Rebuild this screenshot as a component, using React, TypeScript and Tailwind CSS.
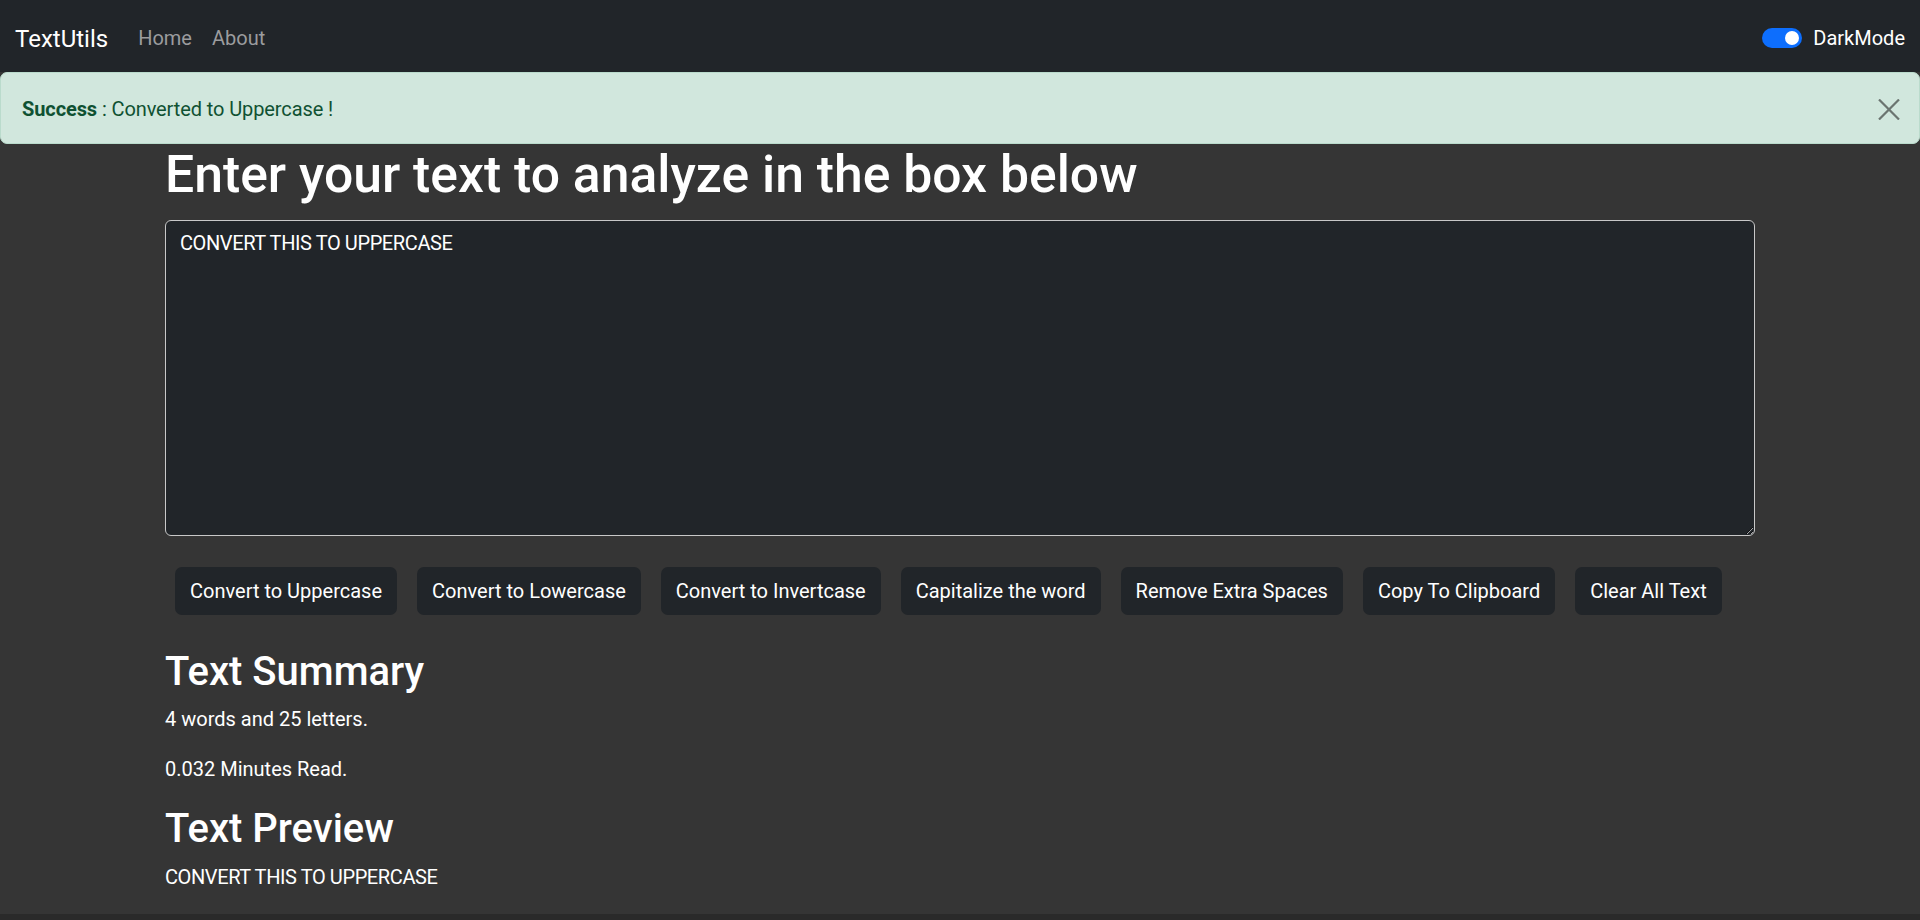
const buttons = [
  "Convert to Uppercase",
  "Convert to Lowercase",
  "Convert to Invertcase",
  "Capitalize the word",
  "Remove Extra Spaces",
  "Copy To Clipboard",
  "Clear All Text",
];

export default function App() {
  const text = "CONVERT THIS TO UPPERCASE";
  return (
    <div className="flex min-h-[920px] flex-col bg-[#353535] font-['Roboto',sans-serif] text-[20px] leading-[30px] text-white">
      <nav className="flex h-[72px] items-center bg-[#212529] px-[15px] pt-[4px]">
        <span className="mr-[20px] mt-[2px] text-[24px] leading-[32px]">TextUtils</span>
        <a className="px-[10px] text-[#9b9c9e]">Home</a>
        <a className="px-[10px] text-[#9b9c9e]">About</a>
        <div className="ml-auto flex items-center gap-[11px]">
          <span className="flex h-[20px] w-[40px] items-center justify-end rounded-full bg-[#0d6efd] px-[3px]">
            <span className="h-[14px] w-[14px] rounded-full bg-white" />
          </span>
          <span>DarkMode</span>
        </div>
      </nav>
      <div className="flex h-[72px] items-center rounded-[7px] border border-[#badbcc] bg-[#d1e7dd] pl-[21px] pr-[19px] pt-[2px] text-[#0f5132]">
        <span className="tracking-[-0.1px]">
          <strong className="font-bold">Success</strong> : Converted to Uppercase !
        </span>
        <svg className="ml-auto" width="22" height="21" viewBox="0 0 22 21">
          <path d="M1 0.5 L21 20.5 M21 0.5 L1 20.5" stroke="#6b7570" strokeWidth="2.2" />
        </svg>
      </div>
      <main className="mx-auto w-[1590px] flex-1">
        <h1 className="text-[51.7px] font-medium leading-[62px]">
          Enter your text to analyze in the box below
        </h1>
        <textarea
          readOnly
          value={text}
          className="mt-[14px] block h-[316px] w-full rounded-[6px] border border-[#c8c8c8] bg-[#212529] px-[14px] py-[7px] tracking-[-0.4px] outline-none"
        />
        <div className="mt-[31px] flex gap-[20px] pl-[10px]">
          {buttons.map((b) => (
            <button key={b} className="h-[48px] rounded-[7px] bg-[#212529] px-[15px]">
              {b}
            </button>
          ))}
        </div>
        <h2 className="mt-[33px] text-[40px] font-medium leading-[48px]">Text Summary</h2>
        <p className="mt-[8px]">4 words and 25 letters.</p>
        <p className="mt-[20px]">0.032 Minutes Read.</p>
        <h2 className="mt-[21px] text-[40px] font-medium leading-[48px]">Text Preview</h2>
        <p className="mt-[9px] tracking-[-0.4px]">{text}</p>
      </main>
      <div className="h-[6px] bg-[#2a2a2a]" />
    </div>
  );
}
